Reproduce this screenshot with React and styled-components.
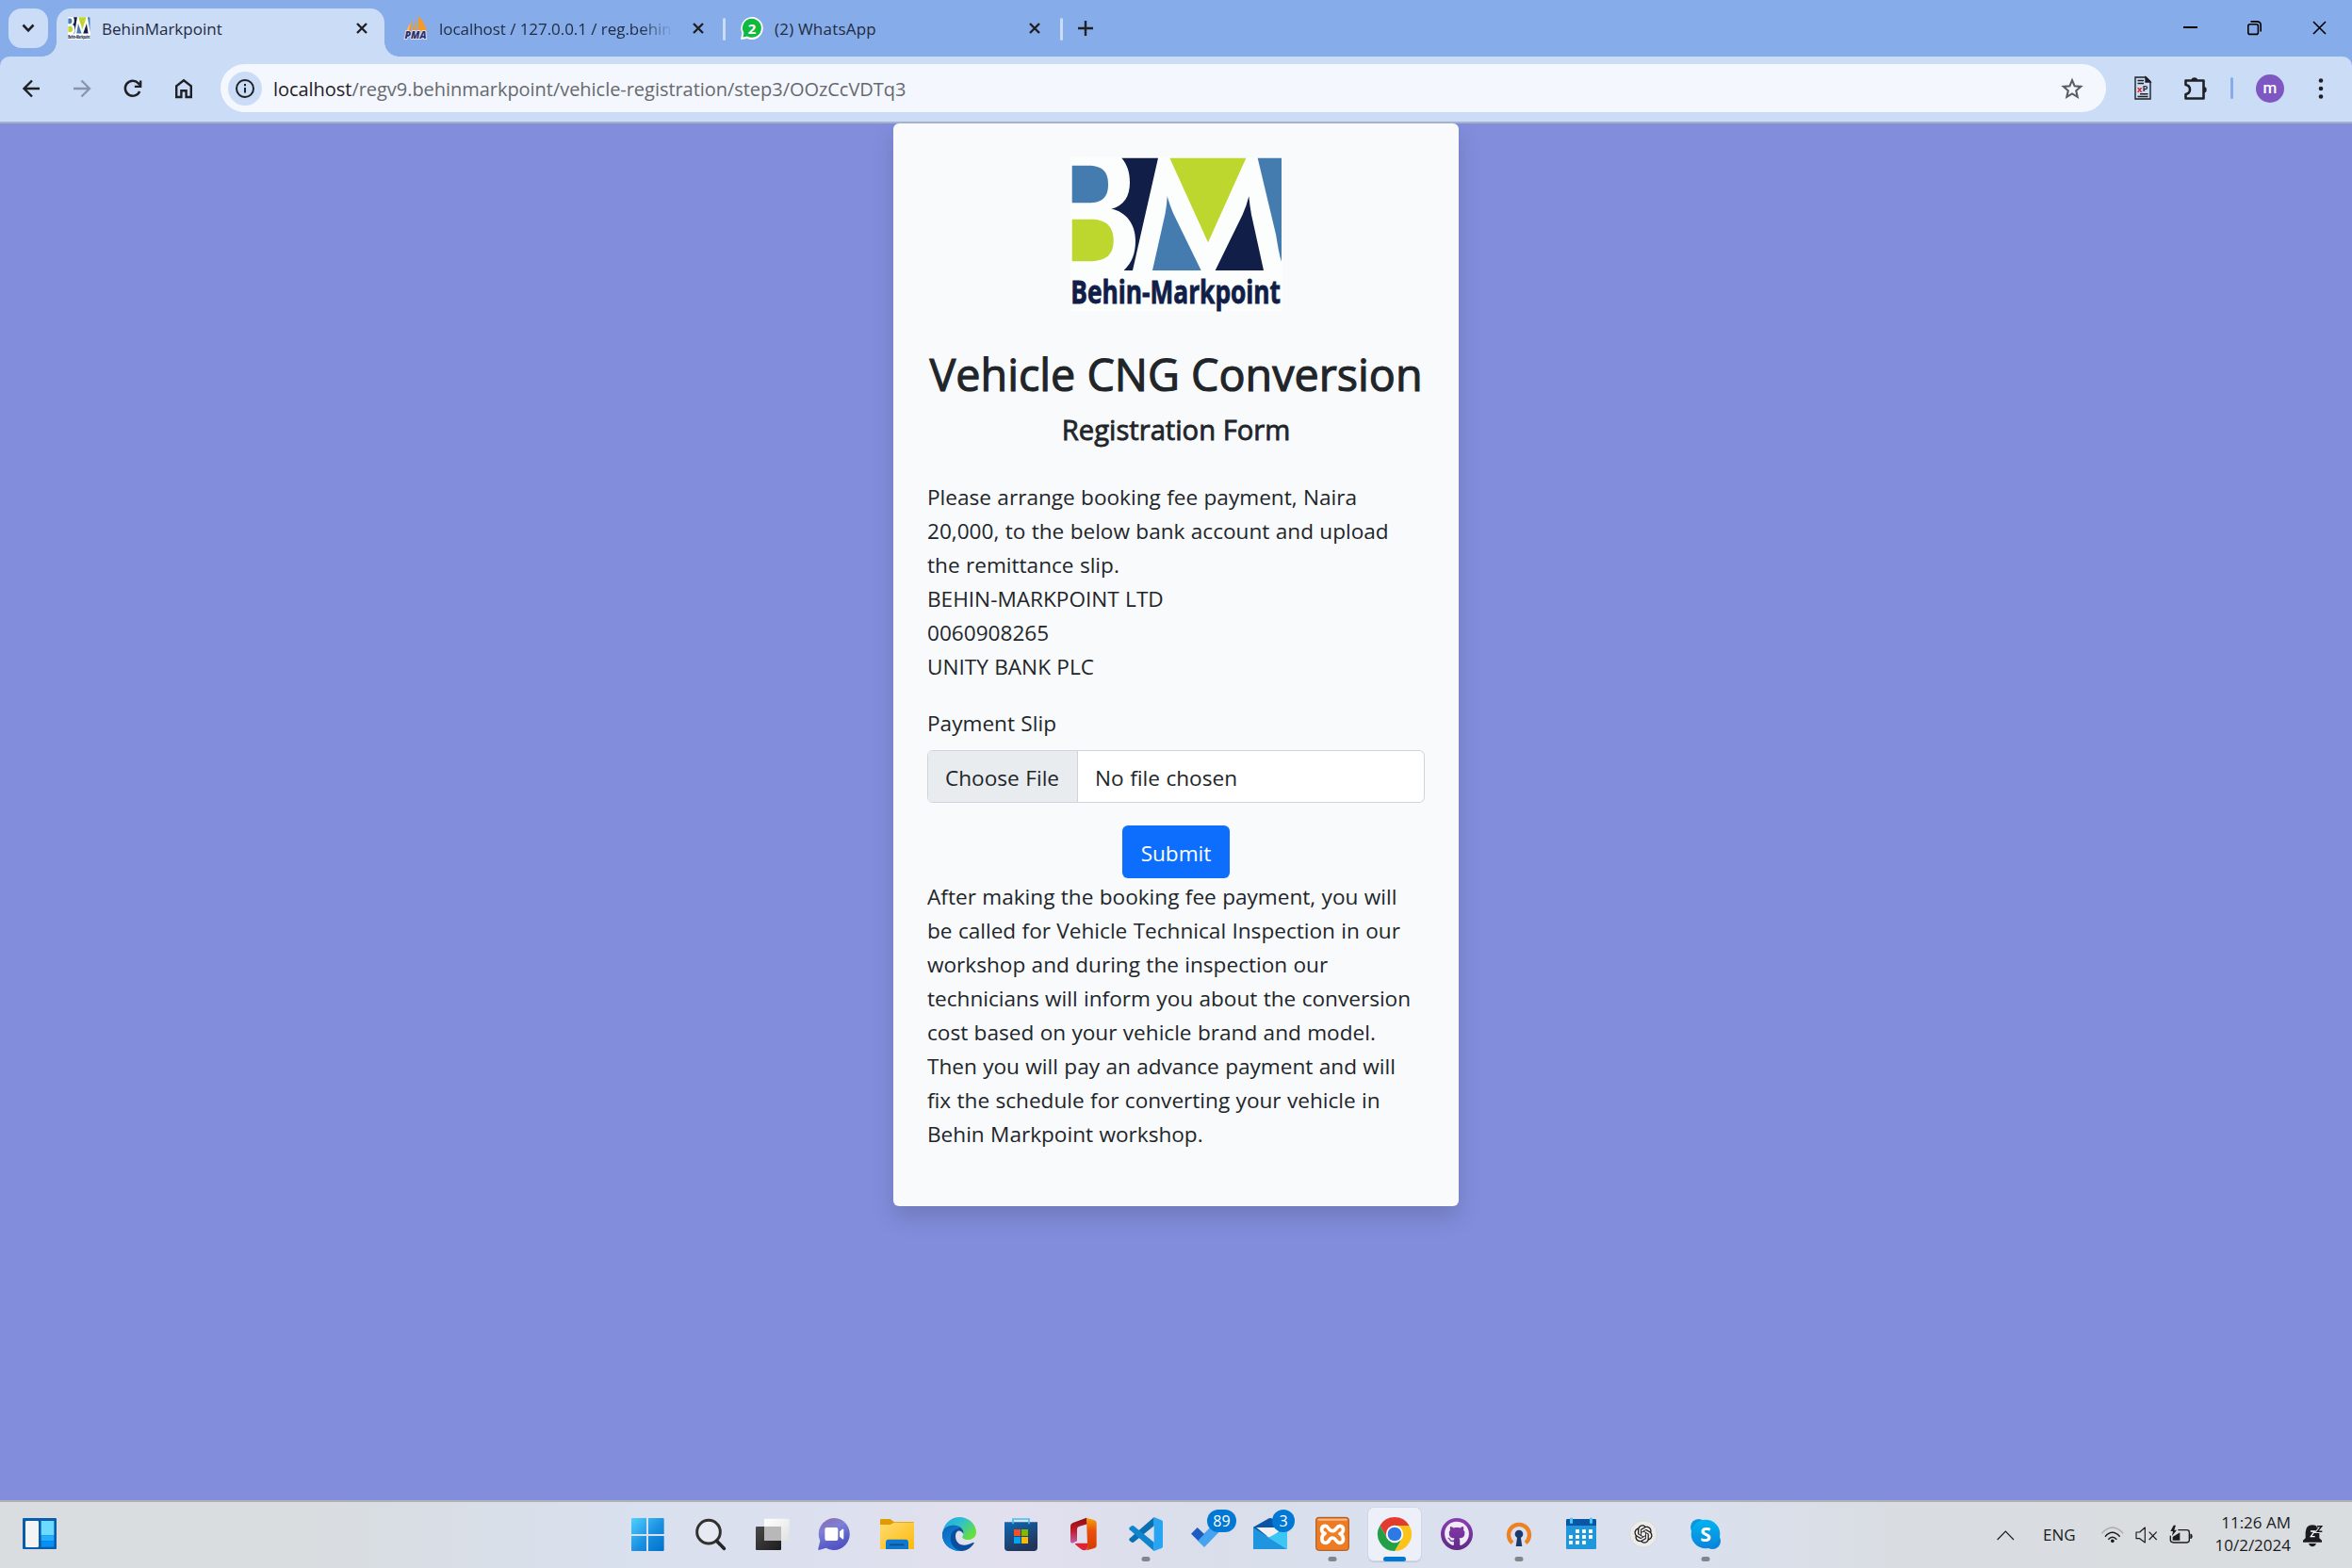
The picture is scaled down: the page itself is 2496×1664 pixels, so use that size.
import React from "react";
import styled, { createGlobalStyle, css } from "styled-components";
import { FaGithub } from "react-icons/fa";
import { RiOpenaiFill } from "react-icons/ri";

const Global = createGlobalStyle`
  * { box-sizing: border-box; }
  body { margin: 0; overflow: hidden; font-family: "Open Sans", "Noto Sans", sans-serif; }
  svg { display: block; flex: none; overflow: visible; }
`;

const Screen = styled.div`
  width: 2496px;
  height: 1664px;
  display: flex;
  flex-direction: column;
  background: #828edc;
`;

/* ---------- tab strip ---------- */
const TabStrip = styled.header`
  height: 60px;
  flex: none;
  display: flex;
  align-items: flex-start;
  background: #86acea;
`;
const TabSearch = styled.button`
  width: 42px;
  height: 42px;
  margin: 9px 9px 0 9px;
  padding: 0;
  border: 0;
  border-radius: 14px;
  background: #cbdcf6;
  display: flex;
  align-items: center;
  justify-content: center;
`;
const Tab = styled.div`
  height: 51px;
  width: ${(p) => p.$width}px;
  margin-top: 9px;
  padding: 0 ${(p) => p.$padRight}px 9px ${(p) => p.$padLeft}px;
  display: flex;
  align-items: center;
  position: relative;
  ${(p) =>
    p.$active &&
    css`
      background: #cbdcf6;
      border-radius: 15px 15px 0 0;
      &::before,
      &::after {
        content: "";
        position: absolute;
        bottom: 0;
        width: 15px;
        height: 15px;
      }
      &::before {
        left: -15px;
        background: radial-gradient(circle at 0 0, transparent 14.5px, #cbdcf6 15px);
      }
      &::after {
        right: -15px;
        background: radial-gradient(circle at 100% 0, transparent 14.5px, #cbdcf6 15px);
      }
    `}
`;
const TabTitle = styled.span`
  flex: 1;
  min-width: 0;
  margin: 2px 0 0 12px;
  white-space: nowrap;
  font-size: 17px;
  letter-spacing: ${(p) => p.$track || 0}px;
  line-height: 26px;
  color: #1f2b40;
  ${(p) => p.$fade && css`mask-image: linear-gradient(to right, #000 86%, transparent 100%);`}
`;
const TabDivider = styled.i`
  width: 3px;
  height: 24px;
  margin: 19px 0 0;
  border-radius: 2px;
  background: #cbdcf6;
`;
const NewTab = styled.div`
  margin: 22px 0 0 16px;
`;
const WindowControls = styled.div`
  margin-left: auto;
  display: flex;
  gap: 54px;
  padding: 22px 27px 0 0;
`;

/* ---------- toolbar ---------- */
const ToolbarBack = styled.div`
  flex: none;
  background: #86acea;
`;
const Toolbar = styled.div`
  height: 71px;
  display: flex;
  align-items: center;
  padding: 0 21px 2px 18px;
  border-bottom: 2px solid #a6b1ca;
  border-radius: 10px 10px 0 0;
  background: #cbdcf6;
`;
const NavButtons = styled.div`
  display: flex;
  gap: 24px;
  width: 216px;
`;
const Omnibox = styled.div`
  width: 2001px;
  height: 51px;
  border-radius: 26px;
  background: #f4f7fd;
  display: flex;
  align-items: center;
  padding: 0 21px 0 8px;
`;
const SiteInfo = styled.div`
  width: 36px;
  height: 36px;
  border-radius: 50%;
  background: #cbdcf6;
  display: flex;
  align-items: center;
  justify-content: center;
`;
const Url = styled.div`
  flex: 1;
  padding: 2px 0 0 12px;
  font-size: 20px;
  line-height: 30px;
  letter-spacing: ${(p) => p.$track}px;
  color: #66696e;
  b { font-weight: 400; color: #1f2023; }
`;
const ToolbarActions = styled.div`
  flex: 1;
  display: flex;
  align-items: center;
  padding-left: 30px;
`;
const ActionDivider = styled.i`
  width: 3px;
  height: 23px;
  margin: 0 24px 0 24px;
  border-radius: 2px;
  background: #86acea;
`;
const Avatar = styled.div`
  width: 30px;
  height: 30px;
  margin-right: 36px;
  border-radius: 50%;
  background: #7e57c2;
  color: #fff;
  font: 500 17px/28px Roboto, sans-serif;
  text-align: center;
`;

/* ---------- page ---------- */
const Page = styled.main`
  flex: 1;
  min-height: 0;
  overflow: hidden;
  display: flex;
  justify-content: center;
  align-items: flex-start;
  background: #828edc;
`;
const Card = styled.form`
  width: 600px;
  height: 1149px;
  padding: 36px;
  border-radius: 6px;
  background: #f8fafc;
  box-shadow: 0 12px 24px rgba(0, 0, 0, 0.15);
  display: flex;
  flex-direction: column;
  color: #212529;
`;
const LogoBox = styled.div`
  height: 163px;
  display: flex;
  justify-content: center;
`;
const Title = styled.h1`
  margin: 38px -20px 0;
  font-size: 46.7px;
  font-weight: 400;
  line-height: 58px;
  -webkit-text-stroke: 1.1px #212529;
  white-space: nowrap;
  text-align: center;
`;
const Subtitle = styled.h5`
  margin: 12px 0 0;
  font-size: 29.2px;
  font-weight: 400;
  line-height: 36px;
  -webkit-text-stroke: 0.8px #212529;
  text-align: center;
`;
const Copy = styled.p`
  margin: ${(p) => p.$top}px 0 0;
  font-size: 22.6px;
  line-height: 36px;
  word-spacing: 0.5px;
  white-space: nowrap;
`;
const Label = styled.label`
  margin-top: 24px;
  font-size: 22.6px;
  line-height: 36px;
  word-spacing: 0.5px;
`;
const FileField = styled.div`
  height: 56px;
  margin-top: 10px;
  display: flex;
  border: 1px solid #ced4da;
  border-radius: 6px;
  background: #fff;
  overflow: hidden;
  font-size: 22.6px;
  line-height: 58px;
  word-spacing: 0.7px;
`;
const FileButton = styled.span`
  width: 159px;
  padding-left: 18px;
  border-right: 1px solid #ced4da;
  background: #e9ecef;
  white-space: nowrap;
`;
const FileName = styled.span`
  padding-left: 18px;
`;
const Submit = styled.button`
  align-self: center;
  width: 114px;
  height: 56px;
  margin-top: 24px;
  padding: 3px 0 0;
  border: 0;
  border-radius: 6px;
  background: #0d6efd;
  color: #fff;
  font: 400 22.6px "Open Sans", sans-serif;
`;

/* ---------- taskbar ---------- */
const Taskbar = styled.footer`
  height: 72px;
  flex: none;
  border-top: 2px solid #b0b2ba;
  display: grid;
  grid-template-columns: 654px 1188px 1fr;
  background: linear-gradient(90deg, #d9dde0 0, #d9dde0 13%, #d9e0ee 27%, #dde0ee 36%, #e2e0ee 43%, #d9deea 52%, #dbe0ef 60%, #dae0ed 72%, #d9dde1 82%, #d9dde0 100%);
`;
const Widgets = styled.div`
  padding: 17px 0 0 24px;
`;
const Apps = styled.div`
  display: flex;
`;
const Slot = styled.div`
  width: 66px;
  height: 70px;
  padding: 6px 4px 0 6px;
  position: relative;
`;
const Tile = styled.div`
  width: 56px;
  height: 56px;
  padding: 10px 9px;
  border-radius: 6px;
  ${(p) =>
    p.$active &&
    css`
      background: #edf0f8;
      box-shadow: 0 0 0 1px #d0d6e5, 0 2px 1px #c3c8d6;
    `}
`;
const Indicator = styled.i`
  position: absolute;
  top: 58px;
  left: 34px;
  width: ${(p) => (p.$active ? 24 : 9)}px;
  height: 5px;
  border-radius: 3px;
  transform: translateX(-50%);
  background: ${(p) => (p.$active ? "#0078d4" : "#82858c")};
`;
const Badge = styled.span`
  position: absolute;
  top: 8px;
  left: ${(p) => p.$left}px;
  width: ${(p) => p.$width}px;
  height: 24px;
  border-radius: 12px;
  background: #0078d4;
  color: #fff;
  font-size: 16px;
  line-height: 24px;
  text-align: center;
`;
const Tray = styled.div`
  display: flex;
  justify-content: flex-end;
  align-items: center;
  padding-right: 30px;
  color: #1b1b1d;
  font-size: 17px;
`;
const Lang = styled.span`
  width: 35px;
  margin: 0 27px 0 30px;
  line-height: 24px;
`;
const Clock = styled.div`
  width: 84px;
  margin: -3px 13px 0 20px;
  display: flex;
  flex-direction: column;
  align-items: flex-end;
  white-space: nowrap;
  line-height: 24px;
`;

/* ---------- icons ---------- */
const Glyph = ({ w, h = w, box, children, color = "#1f2023", stroke = 2 }) => (
  <svg width={w} height={h} viewBox={box || `0 0 ${w} ${h}`} fill="none" stroke={color} strokeWidth={stroke}>
    {children}
  </svg>
);
const CloseX = ({ size = 12, stroke = 2.4, color }) => (
  <Glyph w={size} stroke={stroke} color={color}>
    <path d={`M1 1 L${size - 1} ${size - 1} M${size - 1} 1 L1 ${size - 1}`} />
  </Glyph>
);

const LogoShapes = () => (
  <>
    <path fill="#457cb0" d="M41 46 H92 C138 46 156 66 156 106 C156 146 138 165 92 165 H41 Z" />
    <path fill="#bdd72e" d="M41 217 H100 C150 217 173 240 173 285 C173 330 150 351 92 351 H41 Z" />
    <path fill="#111e48" d="M199 22 H315 L234 380 H206 C232 356 243 326 243 285 C243 232 212 192 166 184 C206 174 225 144 225 100 C225 66 216 42 199 22 Z" />
    <path fill="#bdd72e" d="M352 22 H595 L474 291 Z" />
    <path fill="#457cb0" d="M632 22 H708 V352 C700 328 696 300 690 265 Z" />
    <path fill="#457cb0" d="M344 144 Q352 172 363 198 L452 380 H297 L338 198 Q343 170 344 144 Z" />
    <path fill="#111e48" d="M604 144 Q607 176 612 202 L651 380 H497 L584 202 Q597 174 604 144 Z" />
    <text x="37" y="485" textLength="668" lengthAdjust="spacingAndGlyphs" fontFamily="Open Sans, sans-serif" fontWeight="700" fontSize="102" fill="#111e48" stroke="#111e48" strokeWidth="2.5">
      Behin-Markpoint
    </text>
  </>
);
const Logo = () => (
  <svg width="225" height="168" viewBox="36 20 675 504">
    <rect x="36" y="20" width="675" height="490" fill="#fcfdfd" />
    <LogoShapes />
  </svg>
);
const LogoFavicon = () => (
  <svg width="24" height="24" viewBox="30 16 690 500" preserveAspectRatio="none">
    <rect x="30" y="16" width="690" height="500" fill="#fff" />
    <LogoShapes />
  </svg>
);
const PmaFavicon = () => (
  <svg width="25" height="26" viewBox="0 0 25 26">
    <path d="M9 4 L7 16 L1 16 Q6 11 9 4 Z M13 1 L12 16 L8 16 Q12 9 13 1 Z M15 0 Q22 7 24 16 L14 16 Z" fill="#f29a2e" />
    <path d="M6.5 7 L2 16 L5 16 Z" fill="#f7b968" />
    <text x="0.500" y="24" textLength="23" lengthAdjust="spacingAndGlyphs" fontFamily="Open Sans, sans-serif" fontWeight="800" fontStyle="italic" fontSize="10" fill="#2f2f6e" stroke="#e6ebf6" strokeWidth="1.6" paintOrder="stroke">PMA</text>
  </svg>
);
const WhatsAppFavicon = () => (
  <svg width="24" height="24" viewBox="0 0 24 24">
    <path d="M12 0 A12 12 0 1 1 7 23 L0 24 L1.4 17 A12 12 0 0 1 12 0 Z" fill="#fff" />
    <path d="M12.2 1.8 A10 10 0 1 1 7 20.5 L2.4 21.6 L3.4 17 A10 10 0 0 1 12.2 1.8 Z" fill="#11b93f" />
    <text x="12" y="17.5" textAnchor="middle" fontFamily="Open Sans, sans-serif" fontWeight="700" fontSize="15" fill="#fff">2</text>
  </svg>
);

const appIcon = (center, children) => (
  <svg width="36" height="36" viewBox={`${center - 54} 60 108 108`}>{children}</svg>
);

const Start = appIcon(141, <>
  <defs><linearGradient id="win" gradientUnits="userSpaceOnUse" x1="90" y1="64" x2="194" y2="168"><stop offset="0" stopColor="#4fd0ff" /><stop offset=".55" stopColor="#1a8fe0" /><stop offset="1" stopColor="#0070cc" /></linearGradient></defs>
  <path fill="url(#win)" d="M93 63 H138 V114 H90 V66 Q90 63 93 63Z M144 63 H191 Q194 63 194 66 V114 H144Z M90 120 H138 V168 H93 Q90 168 90 165Z M144 120 H194 V165 Q194 168 191 168 H144Z" />
</>);
const Search = appIcon(339, <>
  <circle cx="336" cy="107" r="37" fill="#e6eaf3" stroke="#33312f" strokeWidth="9" />
  <path d="M363 137 L385 160" stroke="#262626" strokeWidth="11" strokeLinecap="round" />
</>);
const TaskView = appIcon(537, <>
  <defs>
    <linearGradient id="tv" x1="0" y1="0" x2="1" y2="1"><stop offset="0" stopColor="#4a4a4a" /><stop offset="1" stopColor="#1c1c1c" /></linearGradient>
    <linearGradient id="tw" x1="0" y1="0" x2="1" y2="1"><stop offset="0" stopColor="#fff" /><stop offset="1" stopColor="#e2e2e2" /></linearGradient>
  </defs>
  <rect x="486" y="90" width="81" height="75" rx="3" fill="url(#tv)" />
  <rect x="513" y="65" width="80" height="70" rx="2" fill="url(#tw)" />
  <rect x="513" y="90" width="54" height="45" fill="#b8b8b8" />
</>);
const Chat = appIcon(735, <>
  <defs><linearGradient id="ch" x1=".2" y1="0" x2=".6" y2="1"><stop offset="0" stopColor="#8a6cb0" /><stop offset=".35" stopColor="#7d80d8" /><stop offset=".75" stopColor="#5b5fc7" /><stop offset="1" stopColor="#5250c4" /></linearGradient></defs>
  <path d="M736 63 A50 51 0 1 1 710 158 L687 165 Q684 165 685 160 L691 136 A50 51 0 0 1 736 63 Z" fill="url(#ch)" />
  <rect x="706" y="93" width="42" height="42" rx="6" fill="#fff" />
  <path d="M753 106 L762 98 Q766 96 766 101 V127 Q766 132 762 130 L753 122 Z" fill="#fff" />
</>);
const Explorer = appIcon(933, <>
  <defs><linearGradient id="fx" x1="0" y1="0" x2="1" y2="1"><stop offset="0" stopColor="#ffdc70" /><stop offset="1" stopColor="#fcb90c" /></linearGradient></defs>
  <path d="M882 69 Q882 66 885 66 H914 L926 75 H987 Q990 75 990 78 V100 H882 Z" fill="#e19b00" />
  <path d="M882 84 H914 L927 77 H990 V162 H882 Z" fill="url(#fx)" />
  <path d="M900 162 V140 Q900 131 909 131 H963 Q972 131 972 140 V162 Z" fill="#0f78cd" />
  <path d="M914 148 H956" stroke="#0a4f96" strokeWidth="5" strokeLinecap="round" />
</>);
const Edge = appIcon(1131, <>
  <defs>
    <linearGradient id="e1" x1="0" y1="0" x2="1" y2=".6"><stop offset="0" stopColor="#1fa4e8" /><stop offset=".5" stopColor="#2ec0cf" /><stop offset="1" stopColor="#66e03c" /></linearGradient>
    <linearGradient id="e2" x1="0" y1="0" x2=".4" y2="1"><stop offset="0" stopColor="#0c62b8" /><stop offset="1" stopColor="#0e8be0" /></linearGradient>
  </defs>
  <path d="M1081 108 C1086 78 1110 60 1134 60 C1166 60 1188 84 1188 108 C1188 124 1174 133 1160 132 C1144 131 1140 124 1147 116 C1150 100 1136 88 1118 88 C1100 88 1086 98 1081 108 Z" fill="url(#e1)" />
  <path d="M1080 114 C1082 96 1098 85 1118 86 C1136 87 1150 100 1147 114 C1140 98 1122 100 1122 120 C1122 146 1146 158 1176 142 C1186 138 1180 146 1176 150 C1160 170 1142 168 1138 168 C1106 168 1079 146 1080 114 Z" fill="#0b4f9c" />
  <path d="M1080 114 C1082 96 1098 85 1118 86 C1128 87 1134 90 1136 96 C1120 96 1106 108 1106 128 C1106 148 1120 164 1142 168 C1106 170 1079 146 1080 114 Z" fill="url(#e2)" />
</>);
const Store = appIcon(99, <>
  <defs><linearGradient id="st" x1="0" y1="0" x2=".5" y2="1"><stop offset="0" stopColor="#0d69b4" /><stop offset="1" stopColor="#233459" /></linearGradient></defs>
  <path d="M48 76 H153 V157 Q153 168 142 168 H59 Q48 168 48 157 Z" fill="url(#st)" />
  <path d="M75 82 V66 H126 V82" fill="none" stroke="#3cc2f2" strokeWidth="5" />
  <path fill="#f25022" d="M78 99h21v21H78z" /><path fill="#7fba00" d="M102 99h21v21h-21z" />
  <path fill="#00a4ef" d="M78 123h21v21H78z" /><path fill="#ffb900" d="M102 123h21v21h-21z" />
</>);
const Office = appIcon(297, <>
  <defs>
    <linearGradient id="of" x1="0" y1="0" x2="0" y2="1"><stop offset="0" stopColor="#8c0f0f" /><stop offset=".5" stopColor="#c01c2c" /><stop offset="1" stopColor="#c25fae" /></linearGradient>
    <linearGradient id="og" x1="0" y1="0" x2="0" y2="1"><stop offset="0" stopColor="#f7a20b" /><stop offset=".4" stopColor="#e8500a" /><stop offset="1" stopColor="#d43a02" /></linearGradient>
  </defs>
  <path d="M309 62 L268 77 Q258 80 258 90 V138 Q260 145 268 142 L279 136 V98 Q279 92 285 90 L312 82 Z" fill="url(#of)" />
  <path d="M309 62 L334 70 Q341 72 341 79 V151 Q341 157 334 159 L309 166 Q315 160 312 150 Z" fill="url(#og)" />
  <path d="M274 148 Q270 143 278 143 H312 V156 Q312 166 300 166 Q294 165 288 159 Z" fill="#df2337" />
</>);
const VsCode = appIcon(495, <>
  <path d="M446 128 Q442 132 447 136 L453 140 Q457 142 461 139 L524 88 V60 Z" fill="#0a6fb0" />
  <path d="M446 100 Q442 96 447 92 L453 88 Q457 86 461 89 L524 140 V168 Z" fill="#0e85cc" />
  <path d="M524 60 L548 70 Q552 72 552 76 V152 Q552 157 548 159 L524 168 Q520 166 524 160 Z" fill="#27a5f3" />
</>);
const Todo = appIcon(693, <>
  <path d="M684 156 L662 134 L732 62 L754 84 Z" fill="#46a3f0" />
  <path d="M642 113 L662 93 L684 114 L664 135 Z" fill="#1c5cc0" />
</>);
const Mail = appIcon(891, <>
  <path d="M840 92 L886 66 Q894 60 902 66 L948 92 V120 H840 Z" fill="#0a55a8" />
  <path d="M850 93 H938 L894 128 Z" fill="#f1f1f3" />
  <path d="M840 93 L948 162 H840 Z" fill="#1f95df" />
  <path d="M948 93 L888 125 L948 162 Z" fill="#3cc6f3" />
</>);
const Xampp = appIcon(1089, <>
  <rect x="1040" y="61" width="104" height="105" rx="8" fill="#ee7a22" stroke="#a3541c" strokeWidth="3" />
  <path d="M1048 68 H1136" stroke="#f5b88a" strokeWidth="6" strokeLinecap="round" />
  <path d="M1092 104 C1078 104 1080 88 1070 88 C1054 88 1054 108 1068 112 C1054 120 1056 142 1070 142 C1084 142 1080 126 1092 126 C1104 126 1102 142 1116 142 C1130 142 1130 120 1116 113 C1130 108 1130 88 1116 88 C1104 88 1106 104 1092 104 Z" fill="#f07f24" stroke="#fff" strokeWidth="11" strokeLinejoin="round" />
</>);
const Chrome = appIcon(87, <>
  {[["#e33b2e", 0], ["#fcc419", 120], ["#21a048", 240]].map(([fill, turn]) => (
    <path key={turn} fill={fill} transform={`rotate(${turn} 90 114)`} d="M43.2 87 A54 54 0 0 1 136.8 87 L90 87 L66.6 127.5 Z" />
  ))}
  <circle cx="90" cy="114" r="27.5" fill="#fff" />
  <circle cx="90" cy="114" r="22" fill="#2b7ae8" />
</>);
const GitHub = appIcon(285, <>
  <defs><linearGradient id="gh" x1="0" y1="0" x2="0" y2="1"><stop offset="0" stopColor="#8e3bb3" /><stop offset="1" stopColor="#5f2a86" /></linearGradient></defs>
  <circle cx="288" cy="114" r="51" fill="url(#gh)" />
  <FaGithub x="248" y="73" size={80} color="#f0ecf6" />
</>);
const OpenVpn = appIcon(483, <>
  <path d="M465 148 A33 33 0 1 1 507 148" transform="translate(0 -6)" fill="none" stroke="#ee8222" strokeWidth="13" />
  <circle cx="486" cy="114" r="13" fill="#1b3a6b" />
  <path d="M481 120 H491 L496 153 H476 Z" fill="#1b3a6b" />
</>);
const Calendar = appIcon(681, <>
  <path d="M636 86 H732 V158 Q732 162 728 162 H640 Q636 162 636 158 Z" fill="#1f97dd" />
  <path d="M636 70 Q636 66 640 66 H728 Q732 66 732 70 V87 H636 Z" fill="#0a56a4" />
  <path d="M652.500 62 V80 M715.500 62 V80" stroke="#45cbf5" strokeWidth="9" />
  {[[666, 99], [687, 99], [708, 99], [645, 117], [666, 117], [687, 117], [708, 117], [645, 135], [666, 135], [687, 135]].map(([x, y]) => (
    <rect key={`${x}-${y}`} x={x} y={y} width="12" height="12" rx="2" fill="#fff" />
  ))}
</>);
const ChatGpt = appIcon(879, <>
  <circle cx="882" cy="114" r="43" fill="#ecebe9" stroke="#cfd0d2" strokeWidth="2" />
  <RiOpenaiFill x="847" y="79" size={70} color="#1c1c1c" />
</>);
const Skype = appIcon(1077, <>
  <defs><linearGradient id="sk" x1="0" y1="0" x2="0" y2="1"><stop offset="0" stopColor="#00b4f0" /><stop offset="1" stopColor="#0a84dc" /></linearGradient></defs>
  <circle cx="1058" cy="92" r="26" fill="#0a95dd" />
  <circle cx="1102" cy="136" r="26" fill="#0a84d8" />
  <circle cx="1080" cy="114" r="46" fill="url(#sk)" />
  <text x="1080" y="137" textAnchor="middle" fontFamily="Open Sans, sans-serif" fontWeight="700" fontSize="64" fill="#fff">S</text>
</>);

const apps = [
  { name: "start", icon: Start },
  { name: "search", icon: Search },
  { name: "taskview", icon: TaskView },
  { name: "chat", icon: Chat },
  { name: "explorer", icon: Explorer },
  { name: "edge", icon: Edge },
  { name: "store", icon: Store },
  { name: "office", icon: Office },
  { name: "vscode", icon: VsCode, running: true },
  { name: "todo", icon: Todo, badge: { text: "89", left: 33, width: 31 } },
  { name: "mail", icon: Mail, badge: { text: "3", left: 36, width: 24 } },
  { name: "xampp", icon: Xampp, running: true },
  { name: "chrome", icon: Chrome, running: true, active: true },
  { name: "github", icon: GitHub },
  { name: "openvpn", icon: OpenVpn, running: true },
  { name: "calendar", icon: Calendar },
  { name: "chatgpt", icon: ChatGpt },
  { name: "skype", icon: Skype, running: true },
];

const WidgetsIcon = () => (
  <svg width="36" height="33" viewBox="72 93 108 99">
    <rect x="72" y="93" width="108" height="99" rx="3" fill="#0a5cad" />
    <rect x="81" y="102" width="42" height="84" rx="4" fill="#f4f4f5" />
    <rect x="131" y="102" width="41" height="46" fill="#6bdcff" />
    <rect x="131" y="148" width="41" height="18" fill="#22adff" />
    <rect x="131" y="166" width="41" height="19" fill="#0590f2" />
  </svg>
);
/* tray drawings share one 3x coordinate space; each shows its own window of it */
const TraySvg = styled.svg`
  margin-right: ${(p) => p.$gap || 0}px;
`;
const TrayIcon = ({ x, y, w, h, gap, children }) => (
  <TraySvg $gap={gap} width={w / 3} height={h / 3} viewBox={`${x} ${y} ${w} ${h}`} fill="none" stroke="#1b1b1d" strokeWidth="4">
    {children}
  </TraySvg>
);

export default function App() {
  return (
    <Screen>
      <Global />
      <TabStrip>
        <TabSearch>
          <Glyph w={14} h={10} stroke={2.6}><path d="M1.500 1.500 L7 7.300 L12.500 1.500" /></Glyph>
        </TabSearch>
        <Tab $width={348} $padLeft={12} $padRight={18} $active>
          <LogoFavicon />
          <TabTitle>BehinMarkpoint</TabTitle>
          <CloseX />
        </Tab>
        <Tab $width={359} $padLeft={21} $padRight={20}>
          <PmaFavicon />
          <TabTitle $fade $track={-0.05}>localhost / 127.0.0.1 / reg.behin</TabTitle>
          <svg width="21" height="1" />
          <CloseX />
        </Tab>
        <TabDivider />
        <Tab $width={355} $padLeft={16} $padRight={21}>
          <WhatsAppFavicon />
          <TabTitle $track={0.2}>(2) WhatsApp</TabTitle>
          <CloseX />
        </Tab>
        <TabDivider />
        <NewTab>
          <Glyph w={16} stroke={2.4}><path d="M8 0 V16 M0 8 H16" /></Glyph>
        </NewTab>
        <WindowControls>
          <Glyph w={15} color="#000"><path d="M1 7 H16" /></Glyph>
          <Glyph w={15} color="#000" stroke={1.6}>
            <rect x="0.800" y="3.800" width="10.600" height="10.600" rx="2" />
            <path d="M3.500 0.900 H10 Q14.200 0.900 14.200 5 V11.500" />
          </Glyph>
          <CloseX size={15} stroke={1.6} color="#000" />
        </WindowControls>
      </TabStrip>

      <ToolbarBack>
        <Toolbar>
          <NavButtons>
            <Glyph w={30}><path d="M24 15 H8 M16 6.500 L7.500 15 L16 23.500" stroke="#1f2023" strokeWidth="2.400" /></Glyph>
            <Glyph w={30}><path d="M6 15 H22.500 M14.500 6.500 L23 15 L14.500 23.500" stroke="#8795ad" strokeWidth="2.300" /></Glyph>
            <Glyph w={30}>
              <path d="M22.200 18 A8 8 0 1 1 20.800 9.400 L22.500 11.200" strokeWidth="2.500" />
              <path d="M23.200 6.500 V12.800 H16.900" strokeWidth="2.300" />
            </Glyph>
            <Glyph w={30}><path d="M7.200 24 V12.300 L15 6.300 L22.800 12.300 V24 H17.600 V17.200 H12.400 V24 Z" strokeWidth="2.400" /></Glyph>
          </NavButtons>
          <Omnibox>
            <SiteInfo>
              <Glyph w={22}><circle cx="11" cy="11" r="9" /><path d="M11 10 V15.500 M11 6 V8.300" /></Glyph>
            </SiteInfo>
            <Url $track={-0.04}><b>localhost</b>/regv9.behinmarkpoint/vehicle-registration/step3/OOzCcVDTq3</Url>
            <Glyph w={30}>
              <path d="M15 6.200 L17.600 12.300 L24.200 12.900 L19.200 17.300 L20.700 23.800 L15 20.400 L9.300 23.800 L10.800 17.300 L5.800 12.900 L12.400 12.300 Z" stroke="#5a5d62" strokeWidth="2.100" />
            </Glyph>
          </Omnibox>
          <ToolbarActions>
            <Glyph w={18} h={25} stroke={1.4}>
              <path d="M1 1 H12.500 L17 5.500 V24 H1 Z" /><path d="M12 1 L17 6 H12 Z" fill="#1f2023" />
              <path d="M3.500 4.500 H10 M3.500 7.500 H10 M6 18.700 H14.500 M3.500 21.500 H14.500" />
              <text x="3" y="16.500" fontFamily="Open Sans, sans-serif" fontSize="9.500" fontWeight="700" fill="#e2202a" stroke="none">x</text>
              <text x="8.500" y="16" fontFamily="Open Sans, sans-serif" fontSize="9.500" fontWeight="700" fill="#33302f" stroke="none">P</text>
            </Glyph>
            <svg width="34" height="1" />
            <Glyph w={26}>
              <path d="M2.500 4.500 H21.500 V23.500 H2.500 V19 C8.500 18 8.500 10 2.500 9 Z" strokeWidth="2.600" strokeLinejoin="round" />
              <path d="M8.500 4.500 A3.300 3.300 0 0 1 15.100 4.500 Z M21.500 11 A3.200 3.200 0 0 1 21.500 17.400 Z" fill="#1f2023" stroke="none" />
            </Glyph>
            <ActionDivider />
            <Avatar>m</Avatar>
            <Glyph w={6} h={24}><g fill="#1f2023" stroke="none"><circle cx="3" cy="3.500" r="2.300" /><circle cx="3" cy="12" r="2.300" /><circle cx="3" cy="20.500" r="2.300" /></g></Glyph>
          </ToolbarActions>
        </Toolbar>
      </ToolbarBack>

      <Page>
        <Card>
          <LogoBox><Logo /></LogoBox>
          <Title>Vehicle CNG Conversion</Title>
          <Subtitle>Registration Form</Subtitle>
          <Copy $top={36}>
            Please arrange booking fee payment, Naira<br />
            20,000, to the below bank account and upload<br />
            the remittance slip.<br />
            BEHIN-MARKPOINT LTD<br />
            0060908265<br />
            UNITY BANK PLC
          </Copy>
          <Label>Payment Slip</Label>
          <FileField>
            <FileButton>Choose File</FileButton>
            <FileName>No file chosen</FileName>
          </FileField>
          <Submit type="button">Submit</Submit>
          <Copy $top={2}>
            After making the booking fee payment, you will<br />
            be called for Vehicle Technical Inspection in our<br />
            workshop and during the inspection our<br />
            technicians will inform you about the conversion<br />
            cost based on your vehicle brand and model.<br />
            Then you will pay an advance payment and will<br />
            fix the schedule for converting your vehicle in<br />
            Behin Markpoint workshop.
          </Copy>
        </Card>
      </Page>

      <Taskbar>
        <Widgets><WidgetsIcon /></Widgets>
        <Apps>
          {apps.map((app) => (
            <Slot key={app.name}>
              <Tile $active={app.active}>{app.icon}</Tile>
              {app.badge && <Badge $left={app.badge.left} $width={app.badge.width}>{app.badge.text}</Badge>}
              {app.running && <Indicator $active={app.active} />}
            </Slot>
          ))}
        </Apps>
        <Tray>
          <TrayIcon x={86} y={92} w={57} h={36}><path d="M88 125 L114 98 L140 125" strokeWidth="3.500" /></TrayIcon>
          <Lang>ENG</Lang>
          <TrayIcon x={420} y={80} w={72} h={66} gap={12}>
            <path d="M421 108 Q455 70 490 108" stroke="#a9adb1" />
            <path d="M432 118 Q455 92 479 118 M442 127 Q455 112 469 127" strokeWidth="4.500" />
            <circle cx="455.500" cy="132" r="5.500" fill="#1b1b1d" stroke="none" />
          </TrayIcon>
          <TrayIcon x={526} y={80} w={72} h={66} gap={12}>
            <path d="M529 104 H540 L557 89 V137 L540 124 H529 Z M570 103 L594 128 M594 103 L570 128" strokeWidth="3.500" strokeLinejoin="round" />
          </TrayIcon>
          <TrayIcon x={634} y={77} w={75} h={69}>
            <path d="M662 94 H690 Q698 94 698 102 V126 Q698 134 690 134 H648 Q638 134 638 126 V112" />
            <path d="M701 106 H704 Q708 108 708 114 Q708 121 704 122 H701 Z M645 127 V116 L668 102 V127 Z" fill="#1b1b1d" stroke="none" />
            <path d="M648 79 L638 98 H646 L643 113 L658 94 H650 L655 79 Z" fill="#1b1b1d" stroke="none" />
          </TrayIcon>
          <Clock><span>11:26 AM</span><span>10/2/2024</span></Clock>
          <TrayIcon x={1062} y={78} w={66} h={74}>
            <path d="M1062 137 V131 L1070 124 V104 Q1072 82 1092 82 Q1112 82 1114 104 V124 L1122 131 V137 Z M1080 141 H1104 Q1100 151 1092 151 Q1084 151 1080 141 Z" fill="#1b1b1d" stroke="none" />
            <path d="M1086 102 H1099 L1087 119 H1100" stroke="#fff" strokeWidth="4" />
            <path d="M1106 86 H1122 L1107 103 H1123" stroke="#d9dde0" strokeWidth="10" />
            <path d="M1107 86 H1121 L1108 103 H1123" strokeWidth="4.500" />
          </TrayIcon>
        </Tray>
      </Taskbar>
    </Screen>
  );
}
